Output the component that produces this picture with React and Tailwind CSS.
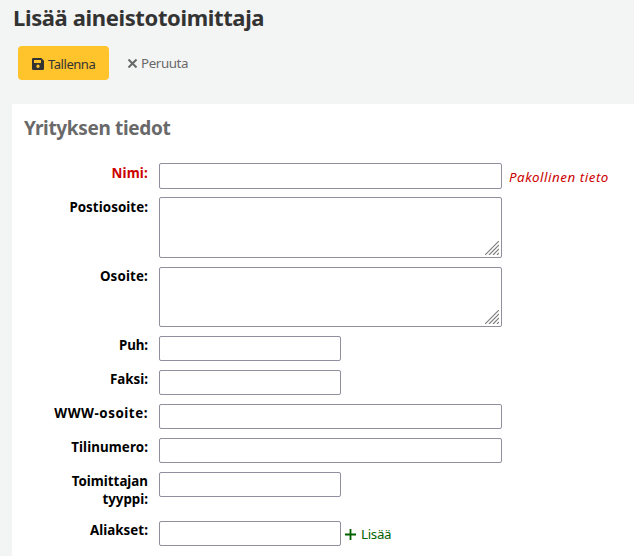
const rows = [
  { label: "Nimi:", required: true, box: "w-[343px] h-[26px]", row: "h-[34px]", text: "pt-px tracking-[0.2px]" },
  { label: "Postiosoite:", area: true, box: "w-[343px] h-[61px]", row: "h-[70px]", text: "pt-px tracking-[0.06px]" },
  { label: "Osoite:", area: true, box: "w-[343px] h-[60px]", row: "h-[69px]", text: "tracking-[0.15px]" },
  { label: "Puh:", box: "w-[182px] h-[25px]", row: "h-[34px]", text: "tracking-[-0.1px]" },
  { label: "Faksi:", box: "w-[182px] h-[25px]", row: "h-[34px]", text: "tracking-[0px]" },
  { label: "WWW-osoite:", box: "w-[343px] h-[25px]", row: "h-[34px]", text: "tracking-[0.55px]" },
  { label: "Tilinumero:", box: "w-[343px] h-[25px]", row: "h-[34px]", text: "tracking-[0.1px]" },
  { label: "Toimittajan tyyppi:", box: "w-[182px] h-[25px]", row: "h-[49px]", text: "tracking-[0px]" },
  { label: "Aliakset:", add: true, box: "w-[182px] h-[25px]", row: "h-[35px]", text: "tracking-[0.05px]" },
];

function SaveIcon() {
  return (
    <svg className="mr-1 h-3 w-3 shrink-0" viewBox="0 0 12 12" fill="#333">
      <path fillRule="evenodd" d="M1.3 0H9.3L12 2.7V10.7Q12 12 10.7 12H1.3Q0 12 0 10.7V1.3Q0 0 1.3 0ZM2 2V5H9V2ZM6 6.5A1.7 1.7 0 1 0 6 9.9A1.7 1.7 0 1 0 6 6.5Z" />
    </svg>
  );
}

function Grip() {
  return (
    <svg className="absolute right-[3px] bottom-[3px] h-[14px] w-[14px]" viewBox="0 0 14 14" stroke="#808080" strokeWidth="1.2">
      <path d="M0 14L14 0M4 14L14 4M8 14L14 8M12 14L14 12" />
    </svg>
  );
}

function Field({ item }) {
  const border = "block rounded-[2px] border border-[#8f8f9d] bg-white px-1 text-sm outline-none ";
  return (
    <div className={"flex items-start " + item.row}>
      <label className={"mr-[11px] w-[104px] shrink-0 text-right text-[13.33px] leading-[18px] font-bold " + item.text + (item.required ? " text-[#c00]" : " text-black")}>
        {item.label}
      </label>
      {item.area ? (
        <div className="relative">
          <textarea aria-label={item.label} className={border + "resize-none " + item.box} />
          <Grip />
        </div>
      ) : (
        <input aria-label={item.label} className={border + item.box} />
      )}
      {item.required && (
        <span className="ml-[7px] pt-[5px] text-[13.33px] leading-[18px] tracking-[0.54px] whitespace-nowrap text-[#c00] italic">Pakollinen tieto</span>
      )}
      {item.add && (
        <a className="ml-1 flex items-center pt-1 text-[13.33px] leading-[18px] tracking-[-0.3px] text-[#006100]">
          <svg className="mr-[5px] h-[11px] w-[11px]" viewBox="0 0 11 11" stroke="currentColor" strokeWidth="1.8">
            <path d="M5.5 0V11M0 5.5H11" />
          </svg>
          Lisää
        </a>
      )}
    </div>
  );
}

export default function App() {
  return (
    <div className="flex h-[556px] w-[634px] flex-col overflow-hidden bg-[#f3f4f4] font-['Noto_Sans',sans-serif]">
      <h1 className="mt-[2px] ml-[13px] h-[30px] text-[22px] leading-[30px] font-bold tracking-[-0.37px] whitespace-nowrap text-[#333]">Lisää aineistotoimittaja</h1>
      <div className="mt-[14px] ml-[18px] flex h-[34px] items-center">
        <button className="flex h-[34px] w-[91px] items-center rounded-[4px] bg-[#ffc32b] pt-[2px] pl-[14px] text-[13px] leading-[18px] tracking-[-0.45px] text-[#333]">
          <SaveIcon />
          Tallenna
        </button>
        <a className="ml-[19px] flex items-center text-[13.33px] leading-[18px] tracking-[-0.4px] text-[#696969]">
          <svg className="mr-1 h-[9px] w-[9px]" viewBox="0 0 9 9" stroke="currentColor" strokeWidth="2">
            <path d="M.5 .5L8.5 8.5M8.5 .5L.5 8.5" />
          </svg>
          Peruuta
        </a>
      </div>
      <main className="mt-6 ml-3 grow bg-white pt-[11px]">
        <h2 className="ml-3 h-[26px] text-[19px] leading-[26px] font-bold tracking-[-0.35px] text-[#696969]">Yrityksen tiedot</h2>
        <form className="mt-[22px] ml-8">
          {rows.map((item) => (
            <Field key={item.label} item={item} />
          ))}
        </form>
      </main>
    </div>
  );
}
